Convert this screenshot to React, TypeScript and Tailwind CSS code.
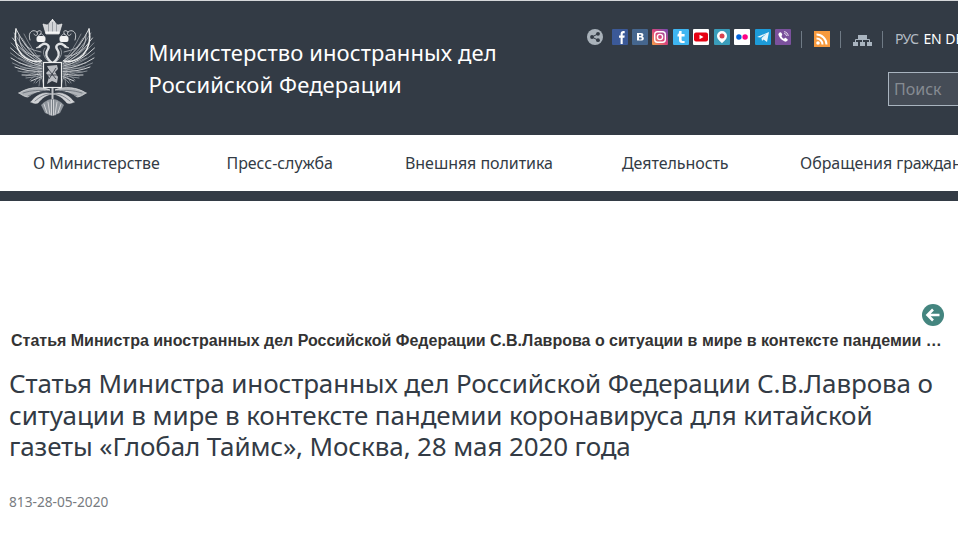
import React from "react";

const pt = { fontFamily: '"Noto Sans", "Open Sans", sans-serif' };

const wingTips: [number, number][] = [
  [6, 10], [4, 14], [2.500, 19], [1.200, 24], [0.500, 29], [0.500, 34], [1, 39], [2.500, 44], [5, 48], [8, 52], [12, 56], [16, 59], [21, 62], [26, 64],
];

function EagleHalf() {
  return (
    <g fill="none" strokeLinecap="round">
      {wingTips.map(([x, y], i) => (
        <path key={i} d={`M32 ${42 + i * 1.300} Q${(32 + x) / 2 - 1} ${(42 + y) / 2 + 8} ${x} ${y}`} stroke={i % 2 ? "#8f959c" : "#dfe1e3"} strokeWidth=".9" />
      ))}
      {wingTips.map(([x, y], i) => (
        <path key={`b${i}`} d={`M30 ${40 + i * 1.200} Q${(30 + x) / 2 + 5} ${(40 + y) / 2 + 8} ${x + 8} ${y + 5}`} stroke="#aeb2b7" strokeWidth=".6" />
      ))}
      <path d="M6 10 Q3 26 12 36 Q20 44 31 42" stroke="#eceded" strokeWidth="1.500" />
      <path d="M9 16 Q9 27 16 33 Q23 38 30 37" stroke="#b9bcc1" strokeWidth="1" />
      <path d="M14 24 Q16 30 31 33" stroke="#b9bcc1" strokeWidth=".8" />
      <path d="M20 21 C17 12 24 10 27 13 C29 16 25 18 24 15 M27 13 C30 10 33 12 30 16" stroke="#c3c6ca" strokeWidth="1" />
      {/* neck + head */}
      <path d="M42 44 C35 38 35 34 38 30 C40 27 37 24 33 25 L30 27" stroke="#dfe1e3" strokeWidth="2.400" />
      <path d="M40 44 C33 38 32 33 35 29" stroke="#9ba0a6" strokeWidth=".9" />
      <path d="M30 26.500 L26 29 L30 28.500 Z" fill="#eceded" stroke="#eceded" strokeWidth=".6" />
      {/* small crown */}
      <rect x="26.500" y="17" width="9" height="6" rx="2" fill="#f3f3f3" />
      <path d="M28 17 L31 14.500 L34 17" stroke="#c9ccd0" strokeWidth=".8" />
      {/* tail leaves */}
      <path d="M9 74 C18 68 31 67 40 71 C31 71 24 73 18 78 C15 78 12 76 9 74 Z" fill="#aeb2b7" stroke="#e4e5e7" strokeWidth=".7" />
      <path d="M13 74 C22 71 30 71 37 72 M18 77 C24 74 30 73 36 73" stroke="#4c545e" strokeWidth=".6" />
      <path d="M21 83 C26 76 34 72 42 75 C36 76 32 79 28 84 C25 85 23 84 21 83 Z" fill="#cfd1d4" stroke="#e4e5e7" strokeWidth=".5" />
      <path d="M25 82 C30 78 34 75 40 75" stroke="#4c545e" strokeWidth=".6" />
      <path d="M31 86 L35 94 L42.500 97 L42.500 80 C38 80 34 83 31 86 Z" fill="#8f959c" />
      <path d="M34 85 L37 94 M38 83 L40 96 M41.500 81 V96" stroke="#dfe1e3" strokeWidth=".8" />
    </g>
  );
}

function Eagle() {
  return (
    <svg width="85" height="97" viewBox="0 0 85 97" className="shrink-0">
      <EagleHalf />
      <g transform="translate(85,0) scale(-1,1)">
        <EagleHalf />
      </g>
      {/* top crown */}
      <path d="M33 5 L36 15 H49 L52 5 Q47 7 46 5 Q44 1 42.500 1 Q41 1 39 5 Q38 7 33 5 Z" fill="#d2d4d7" stroke="#f0f0f0" strokeWidth=".7" />
      <path d="M38.500 5 V14 M42.500 3 V14 M46.500 5 V14" stroke="#7f858c" strokeWidth=".7" />
      <path d="M35.500 13.500 H49.500" stroke="#f5f5f5" strokeWidth="2" />
      <path d="M42.500 0 V2" stroke="#f0f0f0" strokeWidth="1.200" />
      {/* shield */}
      <rect x="33.500" y="43.500" width="18" height="25" fill="#2d343d" stroke="#eceded" strokeWidth="1.200" />
      <path d="M37 47 L47 46 L48 50 L45 53 L48 58 L47 64 L42 62 L37 65 L39 58 L36 54 L39 51 Z" fill="#b9bcc1" />
      <path d="M38 50 L46 60 M46 49 L39 60 M37 56 H48" stroke="#2d343d" strokeWidth=".8" />
      <path d="M42.500 69 V80" stroke="#c3c6ca" strokeWidth="2" />
    </svg>
  );
}

function Box({ bg, children }: { bg: string; children?: React.ReactNode }) {
  return (
    <span className={`w-4 h-4 rounded-[1px] flex items-center justify-center overflow-hidden shrink-0 ${bg}`}>
      <svg width="16" height="16" viewBox="0 0 16 16">{children}</svg>
    </span>
  );
}

function Socials() {
  return (
    <div className="flex items-center gap-[4.450px] shrink-0">
      <Box bg="bg-[#3b5998]">
        <path d="M8.600 15V8.700H7V6.500h1.600V5c0-2 1-3 2.800-3h1.300v2.200h-1c-.7 0-1 .3-1 1v1.300h2l-.3 2.200h-1.700V15z" fill="#fff" />
      </Box>
      <Box bg="bg-[#45668e]">
        <path fillRule="evenodd" d="M5 4h4c1.600 0 2.400.7 2.400 1.900 0 .8-.4 1.400-1.100 1.700 1 .2 1.500.9 1.500 1.800 0 1.400-1 2.200-2.600 2.200H5zm2 1.500v1.600h1.400c.7 0 1-.3 1-.8s-.3-.8-1-.8zm0 3v2h1.600c.7 0 1.100-.4 1.100-1s-.4-1-1.100-1z" fill="#fff" />
      </Box>
      <span className="w-4 h-4 rounded-[1px] bg-gradient-to-tr from-[#f5a13b] via-[#d9417a] to-[#6e46b5] flex items-center justify-center shrink-0">
        <svg width="16" height="16" viewBox="0 0 16 16" fill="none" stroke="#fff" strokeWidth="1.400">
          <rect x="2.700" y="2.700" width="10.600" height="10.600" rx="2.800" />
          <circle cx="8" cy="8" r="2.600" />
        </svg>
      </span>
      <Box bg="bg-[#3fb6f2]">
        <path d="M6.200 2h2.400v3h3v2.400h-3v3c0 1 .5 1.500 1.400 1.500h1.600V14H9c-1.900 0-3-1.100-3-3V7.400H4.500V5.600C5.500 5.200 6 4 6.200 2z" fill="#fff" />
      </Box>
      <Box bg="bg-white">
        <rect x="1" y="3.500" width="14" height="9" rx="2" fill="#e60012" />
        <path d="M6.500 5.700 10.500 8l-4 2.300z" fill="#fff" />
      </Box>
      <Box bg="bg-[#3a9dba]">
        <path fillRule="evenodd" d="M8 2a5 5 0 0 1 5 5c0 3-3.200 5.600-5 7.200C6.200 12.600 3 10 3 7a5 5 0 0 1 5-5z" fill="#fff" />
        <circle cx="8" cy="7" r="2.500" fill="#d9434e" />
      </Box>
      <Box bg="bg-white">
        <circle cx="4.900" cy="8" r="2.700" fill="#0063dc" />
        <circle cx="11.100" cy="8" r="2.700" fill="#ff0084" />
      </Box>
      <Box bg="bg-[#1d9bd9]">
        <path d="M2 8 14 3l-2 10-3.500-2.600L7 12l-.5-3 5-4.200-6.200 3.700z" fill="#e8f5fb" />
      </Box>
      <Box bg="bg-[#7b519d]">
        <path d="M4.700 3.400c.6-.4 1.200-.2 1.600.4l.8 1.300c.3.500.2 1-.2 1.400l-.5.4c.5 1.400 1.300 2.300 2.700 2.900l.5-.6c.4-.4.9-.5 1.300-.2l1.300.9c.6.4.7 1 .3 1.600-.7 1-1.600 1.400-2.700 1C6.800 11.400 4.500 9.100 3.500 6.100c-.3-1.200.2-2 1.200-2.700z" fill="#fff" />
        <path d="M9 2.700c2.500.2 4 1.800 4.200 4.300M9.200 4.500c1.400.2 2.100 1 2.300 2.400" stroke="#fff" strokeWidth=".8" fill="none" />
      </Box>
    </div>
  );
}

export default function App() {
  return (
    <div className="w-[958px] h-[534px] overflow-hidden bg-white flex flex-col">
      <header className="h-[135px] shrink-0 bg-[#333b45] border-t border-[#d5d7d9] flex overflow-hidden" style={pt}>
        <div className="pl-[10px] pt-[18px] w-[148.500px] shrink-0">
          <Eagle />
        </div>
        <h1 className="text-[22px] leading-[32px] text-white pt-[35px] w-[400.500px] shrink-0 font-normal tracking-[0.1px] whitespace-nowrap">
          Министерство иностранных дел
          <br />
          Российской Федерации
        </h1>
        <div className="flex-1 flex flex-col items-start pl-[38px] pt-[28px] min-w-0">
          <div className="flex items-start h-[20px] whitespace-nowrap">
            <svg width="16" height="16" viewBox="0 0 16 16" className="mr-[8.500px] shrink-0">
              <circle cx="8" cy="8" r="8" fill="#a9b2ba" />
              <circle cx="5" cy="8" r="1.900" fill="#333b45" />
              <circle cx="11" cy="4.800" r="1.900" fill="#333b45" />
              <circle cx="11" cy="11.200" r="1.900" fill="#333b45" />
              <path d="M5 8 11 4.800M5 8l6 3.200" stroke="#333b45" strokeWidth="1" />
            </svg>
            <Socials />
            <span className="w-px h-[17px] bg-[#6f7a85] shrink-0 mt-[2px] ml-[9.500px] mr-[12px]" />
            <svg width="16" height="16" viewBox="0 0 16 16" className="shrink-0 mt-[2px]">
              <rect width="16" height="16" fill="#f79a3e" />
              <circle cx="4" cy="12" r="1.800" fill="#fff" />
              <path d="M2.500 7.500a6 6 0 0 1 6 6M2.500 3.500a10 10 0 0 1 10 10" stroke="#fff" strokeWidth="2" fill="none" />
            </svg>
            <span className="w-px h-[17px] bg-[#6f7a85] shrink-0 mt-[2px] ml-[10px] mr-[12.500px]" />
            <svg width="19" height="11" viewBox="0 0 19 11" className="shrink-0 mt-[6px]">
              <rect x="5" y="0" width="9" height="4" fill="#a9b4bf" />
              <path d="M2.500 7V4.500h14V7M9.500 4v3" stroke="#a9b4bf" fill="none" />
              <rect x="0" y="7" width="5" height="4" fill="#a9b4bf" />
              <rect x="7" y="7" width="5" height="4" fill="#a9b4bf" />
              <rect x="14" y="7" width="5" height="4" fill="#a9b4bf" />
            </svg>
            <span className="w-px h-[17px] bg-[#6f7a85] shrink-0 mt-[2px] ml-[10px] mr-[12px]" />
            <span className="text-[14px] leading-[20px] text-[#b4bcc4] tracking-[-0.6px]">РУС</span>
            <span className="text-[14px] leading-[20px] text-white ml-[5px] tracking-[-0.3px]">EN</span>
            <span className="text-[14px] leading-[20px] text-white ml-[4px]">DE</span>
          </div>
          <div className="mt-[23px] ml-[301px] w-[120px] h-[34px] shrink-0 border border-[#a9b4bf] bg-[#454c56] pl-[5px] flex items-center text-[16px] text-[#868b92]">
            Поиск
          </div>
        </div>
      </header>
      <nav className="h-[56px] shrink-0 flex items-center pl-[33px] text-[16px] text-[#333b45] whitespace-nowrap overflow-hidden tracking-[-0.05px]" style={pt}>
        <span className="w-[193.500px] shrink-0">О Министерстве</span>
        <span className="w-[178.500px] shrink-0">Пресс-служба</span>
        <span className="w-[217px] shrink-0">Внешняя политика</span>
        <span className="w-[178px] shrink-0">Деятельность</span>
        <span className="shrink-0">Обращения граждан</span>
      </nav>
      <div className="h-[10px] shrink-0 bg-[#333b45]" />
      <main className="flex-1 flex flex-col pl-[10px] pr-[14px] pt-[103px]">
        <div className="flex justify-end h-[22px]">
          <svg width="22" height="22" viewBox="0 0 22 22">
            <circle cx="11" cy="11" r="11" fill="#44857f" />
            <path d="M17.500 11H7M11 5.500 5.500 11l5.500 5.500" stroke="#fff" strokeWidth="2.600" fill="none" />
          </svg>
        </div>
        <div className="mt-[5px] h-[20px] leading-[20px] text-[16px] font-bold text-[#333333] whitespace-nowrap overflow-hidden text-ellipsis pl-px" style={{ fontFamily: '"Liberation Sans", sans-serif' }}>
          Статья Министра иностранных дел Российской Федерации С.В.Лаврова о ситуации в мире в контексте пандемии коронавируса для китайской газеты
        </div>
        <h2 className="mt-[17px] -ml-px text-[26px] leading-[31.500px] text-[#333b45] font-normal tracking-[-0.12px]" style={pt}>
          Статья Министра иностранных дел Российской Федерации С.В.Лаврова о ситуации в мире в контексте пандемии коронавируса для китайской газеты «Глобал Таймс», Москва, 28 мая 2020 года
        </h2>
        <div className="mt-[29px] -ml-px text-[13.700px] text-[#777b80]" style={pt}>813-28-05-2020</div>
      </main>
    </div>
  );
}
